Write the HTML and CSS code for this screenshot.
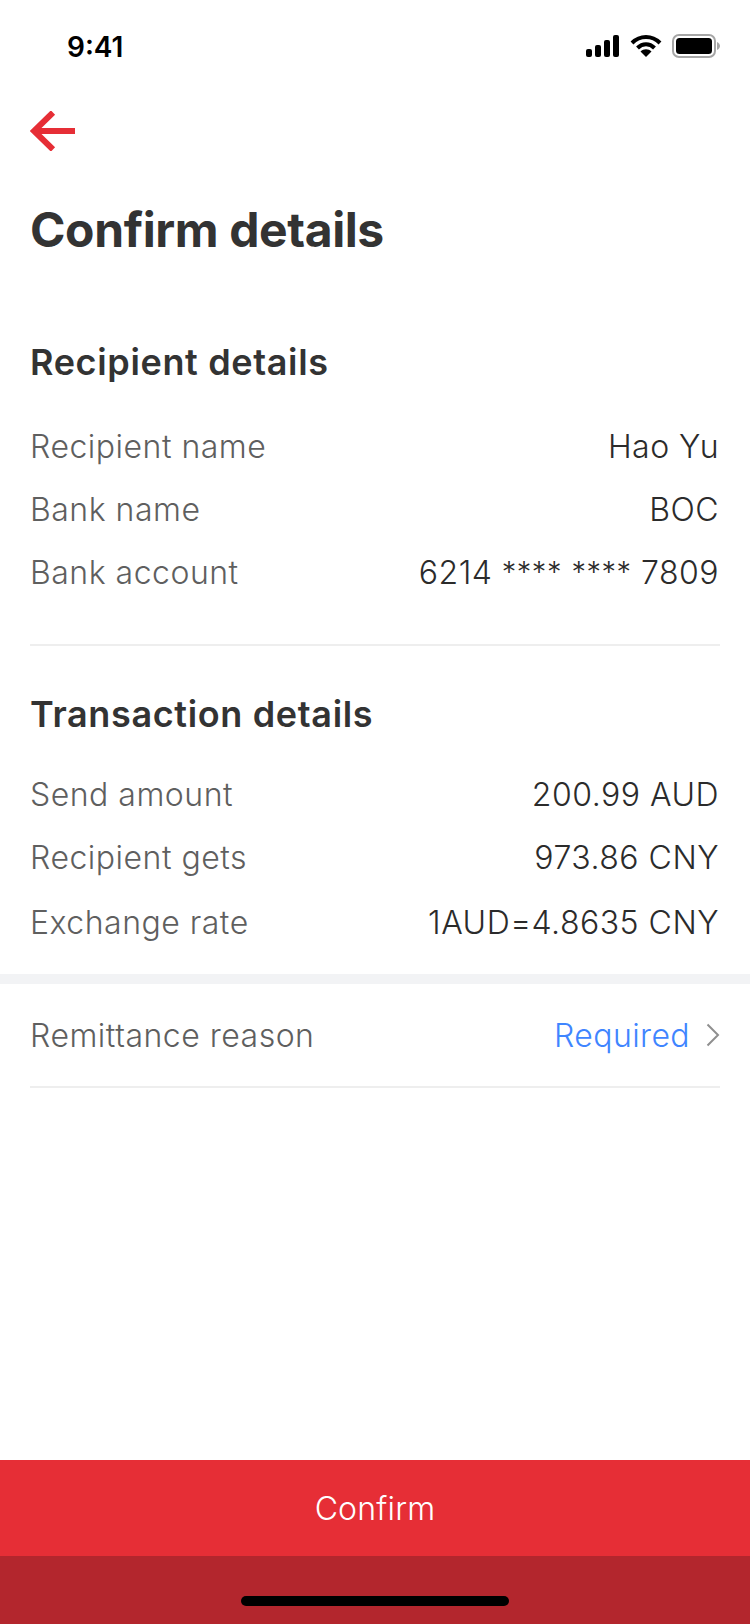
FILE: index.html
```html
<!DOCTYPE html>
<html lang="en">
<head>
  <meta charset="UTF-8" />
  <meta name="viewport" content="width=device-width, initial-scale=1" />
  <title>Confirm details</title>
  <link rel="stylesheet" href="styles.css">
</head>
<body>
  <div class="screen">
    <div class="status-bar">
      <span class="status-time">9:41</span>
      <div class="status-icons">
        <svg width="34" height="22" viewBox="0 0 34 22" fill="#000">
          <rect x="0" y="14" width="6" height="8" rx="2"/>
          <rect x="9" y="10" width="6" height="12" rx="2"/>
          <rect x="18" y="5" width="6" height="17" rx="2"/>
          <rect x="27" y="0" width="6" height="22" rx="2"/>
        </svg>
        <svg width="32" height="22" viewBox="0 0 32 22" fill="none" stroke="#000" stroke-width="4">
          <path d="M2 8 C10 0 22 0 30 8"/>
          <path d="M7.5 13 C12.5 8 19.5 8 24.5 13"/>
          <path d="M16 22 L10.5 16.5 C13.5 13.5 18.5 13.5 21.5 16.5 Z" fill="#000" stroke="none"/>
        </svg>
        <svg width="48" height="24" viewBox="0 0 48 24">
          <rect x="1" y="1" width="42" height="22" rx="6" fill="none" stroke="#a6a6a6" stroke-width="2"/>
          <rect x="4" y="4" width="36" height="16" rx="3.5" fill="#000"/>
          <path d="M45 8 C47 9 48 10.500 48 12 C48 13.500 47 15 45 16 Z" fill="#a6a6a6"/>
        </svg>
      </div>
    </div>

    <div class="nav">
      <svg class="back" width="46" height="40" viewBox="0 0 46 40" fill="none" stroke="#e62e36" stroke-width="6">
        <path d="M45 20 H4"/>
        <path d="M23 1.500 L4 20 L23 38.500"/>
      </svg>
    </div>

    <h1 class="title">Confirm details</h1>

    <section class="section">
      <h2 class="section-title">Recipient details</h2>
      <div class="row"><span class="label">Recipient name</span><span class="value">Hao Yu</span></div>
      <div class="row"><span class="label">Bank name</span><span class="value">BOC</span></div>
      <div class="row"><span class="label">Bank account</span><span class="value">6214 <span class="mask">****</span> <span class="mask">****</span> 7809</span></div>
    </section>

    <div class="divider"></div>

    <section class="section section-second">
      <h2 class="section-title">Transaction details</h2>
      <div class="row"><span class="label">Send amount</span><span class="value">200.99 AUD</span></div>
      <div class="row"><span class="label">Recipient gets</span><span class="value">973.86 CNY</span></div>
      <div class="row row-last"><span class="label">Exchange rate</span><span class="value">1AUD=4.8635 CNY</span></div>
    </section>

    <div class="band"></div>

    <div class="reason">
      <span class="label">Remittance reason</span>
      <span class="reason-right">
        <span class="required">Required</span>
        <svg width="14" height="24" viewBox="0 0 14 24" fill="none" stroke="#8f8f8f" stroke-width="2">
          <path d="M1.500 1.500 L12 12 L1.500 22.500"/>
        </svg>
      </span>
    </div>
    <div class="divider"></div>

    <div class="spacer"></div>

    <button class="confirm">Confirm</button>
    <div class="home-area"><div class="home-bar"></div></div>
  </div>
</body>
</html>
```

FILE: styles.css
```css
html, body {
  margin: 0;
  padding: 0;
  background: #fff;
}
.screen {
  width: 750px;
  height: 1624px;
  display: flex;
  flex-direction: column;
  font-family: "Inter", "Liberation Sans", sans-serif;
  overflow: hidden;
}
.status-bar {
  height: 94px;
  box-sizing: border-box;
  padding: 33px 30px 0 67px;
  display: flex;
  justify-content: space-between;
  align-items: flex-start;
}
.status-time {
  font-size: 28px;
  line-height: 28px;
  font-weight: 600;
  color: #000;
}
.status-icons {
  display: flex;
  align-items: center;
  gap: 10px;
  margin-top: 1px;
}
.nav {
  height: 40px;
  padding: 17px 30px 0;
}
.back {
  display: block;
}
.title {
  margin: 52px 30px 0;
  font-size: 48px;
  line-height: 54px;
  font-weight: 700;
  letter-spacing: -0.4px;
  color: #333;
}
.section {
  padding: 0 30px;
  margin-top: 84px;
  margin-bottom: 40px;
}
.section-second {
  margin-top: 47px;
  margin-bottom: 20px;
}
.section-title {
  margin: 0 0 32px;
  font-size: 36px;
  line-height: 42px;
  font-weight: 600;
  color: #333;
  letter-spacing: 0.65px;
}
.section-second .section-title {
  margin-bottom: 28px;
}
.row {
  display: flex;
  justify-content: space-between;
  align-items: center;
  height: 63px;
  padding-right: 1px;
}
.row-last {
  margin-top: 2px;
}
.label {
  font-size: 32px;
  font-weight: 300;
  color: #5f5f5f;
  letter-spacing: 0.5px;
}
.value {
  font-size: 32px;
  font-weight: 300;
  color: #2b2b2b;
  letter-spacing: 0.5px;
}
.mask {
  font-size: 29px;
  vertical-align: 2px;
}
.divider {
  height: 2px;
  margin: 0 30px;
  background: #eee;
  flex-shrink: 0;
}
.band {
  height: 10px;
  background: #f2f3f5;
  flex-shrink: 0;
}
.reason {
  height: 102px;
  padding: 0 30px;
  display: flex;
  justify-content: space-between;
  align-items: center;
}
.reason-right {
  display: flex;
  align-items: center;
  gap: 16px;
}
.required {
  font-size: 32px;
  font-weight: 300;
  color: #3f85ff;
  letter-spacing: 0.4px;
}
.spacer {
  flex: 1;
}
.confirm {
  height: 96px;
  border: none;
  background: #e62e36;
  color: #fff;
  font-family: inherit;
  font-size: 32px;
  font-weight: 300;
  letter-spacing: 0.2px;
  flex-shrink: 0;
  padding: 0;
}
.home-area {
  height: 68px;
  background: #b3262d;
  flex-shrink: 0;
  display: flex;
  justify-content: center;
  padding-top: 40px;
  box-sizing: border-box;
}
.home-bar {
  width: 268px;
  height: 10px;
  border-radius: 5px;
  background: #000;
}
```
